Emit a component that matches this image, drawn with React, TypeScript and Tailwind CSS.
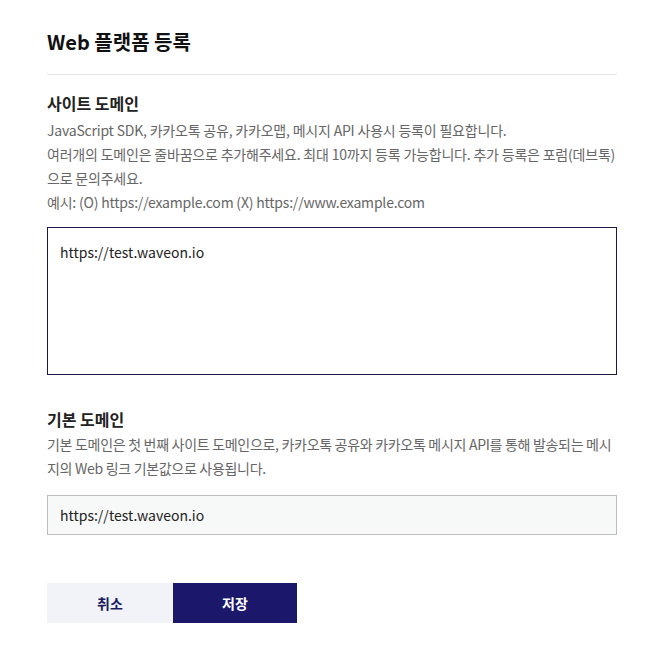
import React from 'react';

const font = { fontFamily: '"Noto Sans CJK KR", "Noto Sans", sans-serif' };

export default function App() {
  return (
    <div className="min-h-screen bg-white" style={font}>
      <div className="pl-[47px] pr-[46px] w-[663px]">
        <h1 className="pt-7 pb-[18px] text-xl leading-7 font-semibold text-[#111] border-b border-[#e5e5e5]">
          Web 플랫폼 등록
        </h1>

        <section className="mt-4">
          <h2 className="text-base leading-6 font-semibold text-[#222]">사이트 도메인</h2>
          <div className="mt-[3px] text-sm leading-6 text-[#666] tracking-[-0.2px] whitespace-nowrap">
            <p>JavaScript SDK, 카카오톡 공유, 카카오맵, 메시지 API 사용시 등록이 필요합니다.</p>
            <p>여러개의 도메인은 줄바꿈으로 추가해주세요. 최대 10까지 등록 가능합니다. 추가 등록은 포럼(데브톡)</p>
            <p>으로 문의주세요.</p>
            <p>예시: (O) https://example.com (X) https://www.example.com</p>
          </div>
          <textarea
            className="mt-[13px] block w-full h-[148px] resize-none border border-[#1c1a45] px-3 py-3 text-sm leading-6 text-[#222] outline-none"
            defaultValue="https://test.waveon.io"
          />
        </section>

        <section className="mt-8">
          <h2 className="text-base leading-6 font-semibold text-[#222]">기본 도메인</h2>
          <div className="mt-px text-sm leading-6 text-[#666] tracking-[-0.3px] whitespace-nowrap">
            <p>기본 도메인은 첫 번째 사이트 도메인으로, 카카오톡 공유와 카카오톡 메시지 API를 통해 발송되는 메시</p>
            <p>지의 Web 링크 기본값으로 사용됩니다.</p>
          </div>
          <input
            className="mt-[15px] block w-full h-10 border border-[#bdbdbd] bg-[#f7f8f8] px-3 text-sm text-[#222] outline-none"
            defaultValue="https://test.waveon.io"
            readOnly
          />
        </section>

        <div className="mt-12 flex">
          <button className="w-[126px] h-10 bg-[#f2f3f8] text-sm font-bold text-[#1c1a5e]">취소</button>
          <button className="w-[124px] h-10 bg-[#1b176b] text-sm font-bold text-white">저장</button>
        </div>
      </div>
    </div>
  );
}
